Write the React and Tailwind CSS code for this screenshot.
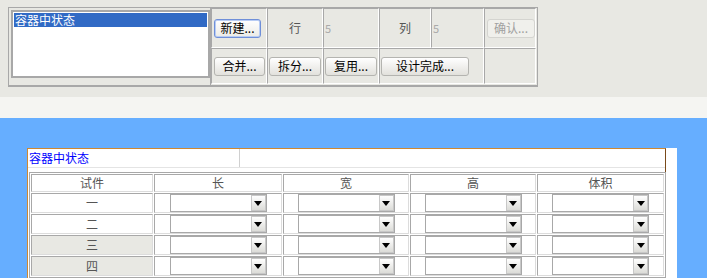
import React from "react";

const font = { fontFamily: '"Noto Sans CJK SC", "Liberation Sans", sans-serif' };

function Btn({ children, w, focus, disabled }) {
  return (
    <div
      className={`h-[19px] ${w} flex items-center justify-center rounded-[3px] border text-[12px] leading-none ${
        disabled
          ? "border-[#d4d4d0] bg-[#f0f0ec] text-[#a0a0a0]"
          : focus
          ? "border-[#6f8fd8] bg-gradient-to-b from-white to-[#ecebe6] text-black shadow-[inset_0_0_0_1px_#b8ccf4]"
          : "border-[#b4b4b0] bg-gradient-to-b from-white to-[#e2e1dc] text-black"
      }`}
    >
      {children}
    </div>
  );
}

function Combo() {
  return (
    <div className="mx-auto w-[97px] h-[18px] border border-[#a8a8a8] bg-white flex justify-end">
      <div className="w-[15px] h-full border border-[#c8c8c8] bg-gradient-to-b from-white to-[#dcdcd8] flex items-center justify-center">
        <svg width="8" height="5" viewBox="0 0 8 5">
          <path d="M0 0h8L4 5z" fill="#000" />
        </svg>
      </div>
    </div>
  );
}

export default function App() {
  const cols = ["长", "宽", "高", "体积"];
  const rows = [
    { label: "一", gray: false },
    { label: "二", gray: false },
    { label: "三", gray: true },
    { label: "四", gray: true },
  ];
  const cell = "border-t border-l border-[#a8a8a8] border-r-[#dcdcdc] border-b-[#dcdcdc] border-r border-b";

  return (
    <div className="w-[707px] h-[278px] overflow-hidden bg-[#66aeff]" style={font}>
      {/* top form */}
      <div className="h-[97px] bg-[#e8e8e3] pt-[7px] pl-[8px]">
        <div className="flex w-[530px] h-[80px] border border-[#a8a8a8] border-b-2">
          <div className="w-[202px] pl-[2px] pt-[2px] border-r border-[#a8a8a8]">
            <div className="w-[199px] h-[68px] border-2 border-[#a8a8a8] bg-white p-[1px]">
              <div className="h-[14px] bg-[#316ac5] text-white text-[12px] leading-[14px] pl-[1px]">
                容器中状态
              </div>
            </div>
          </div>
          <div className="grid grid-cols-[56px_56px_56px_52px_53px_52px] grid-rows-[40px_36px]">
            <div className={`${cell} border-r-white border-b-white flex items-center pl-[2px]`}>
              <Btn w="w-[47px]" focus>新建...</Btn>
            </div>
            <div className={`${cell} border-r-white border-b-white flex items-center justify-center text-[12px] text-[#555]`}>
              行
            </div>
            <div className={`${cell} border-r-white border-b-white flex items-center pl-[1px] text-[11px] text-[#aaa]`}>
              5
            </div>
            <div className={`${cell} border-r-white border-b-white flex items-center justify-center text-[12px] text-[#555]`}>
              列
            </div>
            <div className={`${cell} border-r-white border-b-white flex items-center pl-[1px] text-[11px] text-[#aaa]`}>
              5
            </div>
            <div className={`${cell} border-r-white border-b-white flex items-center pl-[2px]`}>
              <Btn w="w-[48px]" disabled>确认...</Btn>
            </div>
            <div className={`${cell} border-r-white border-b-white flex items-center pl-[2px]`}>
              <Btn w="w-[51px]">合并...</Btn>
            </div>
            <div className={`${cell} border-r-white border-b-white flex items-center pl-[1px]`}>
              <Btn w="w-[52px]">拆分...</Btn>
            </div>
            <div className={`${cell} border-r-white border-b-white flex items-center pl-[1px]`}>
              <Btn w="w-[52px]">复用...</Btn>
            </div>
            <div className={`${cell} col-span-2 border-r-white border-b-white flex items-center pl-[1px]`}>
              <Btn w="w-[88px]">设计完成...</Btn>
            </div>
            <div className={`${cell} border-r-white border-b-white`} />
          </div>
        </div>
      </div>
      <div className="h-[21px] bg-[#f5f5f2]" />

      {/* lower panel */}
      <div className="pt-[30px] pl-[27px]">
        <div className="w-[650px] h-[140px] bg-white">
          <div className="w-[639px] h-full border-t border-l border-r border-t-[#cc8833] border-l-[#cc8833] border-r-[#7a4a1a]">
            <div className="flex h-[19px] border-b border-[#e4e4e4]">
              <div className="w-[212px] border-r border-[#d0d0d0] text-[#0000ff] text-[12px] leading-[17px] pl-[1px]">
                容器中状态
              </div>
              <div className="flex-1" />
            </div>
            <div className="pt-[4px] pl-[1px]">
              <table className="border-separate border-spacing-[1px] border border-[#a8a8a8] text-[12px] text-[#555] w-[635px] table-fixed">
                <colgroup>
                  <col className="w-[122px]" />
                  <col className="w-[128px]" />
                  <col className="w-[126px]" />
                  <col className="w-[126px]" />
                  <col className="w-[127px]" />
                </colgroup>
                <tbody>
                  <tr className="h-[18px]">
                    <td className={`${cell} text-center leading-[14px] p-0`}>试件</td>
                    {cols.map((c) => (
                      <td key={c} className={`${cell} text-center leading-[14px] p-0`}>
                        {c}
                      </td>
                    ))}
                  </tr>
                  {rows.map((r) => (
                    <tr key={r.label} className="h-[20px]">
                      <td className={`${cell} text-center p-0 ${r.gray ? "bg-[#e8e8e3]" : ""}`}>{r.label}</td>
                      {cols.map((c) => (
                        <td key={c} className={`${cell} p-0`}>
                          <Combo />
                        </td>
                      ))}
                    </tr>
                  ))}
                </tbody>
              </table>
              <div className="flex h-[10px] border-t border-[#a8a8a8] w-[636px]">
                <div className="w-[86px] border-r border-[#a8a8a8]" />
                <div className="w-[125px] border-r border-[#a8a8a8]" />
                <div className="w-[88px] border-r border-[#a8a8a8]" />
                <div className="w-[124px] border-r border-[#a8a8a8]" />
                <div className="w-[88px] border-r border-[#a8a8a8]" />
                <div className="flex-1" />
              </div>
            </div>
          </div>
        </div>
      </div>
    </div>
  );
}
